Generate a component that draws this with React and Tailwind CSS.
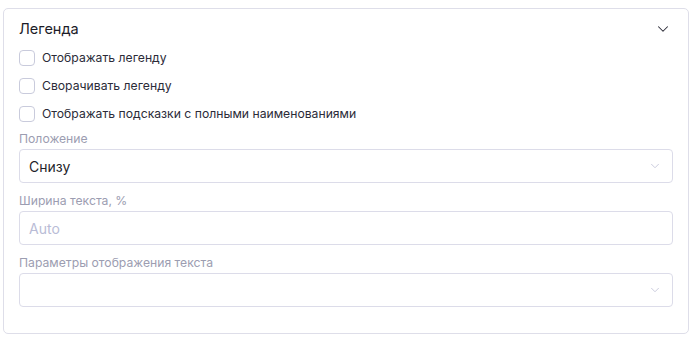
import { ChevronDown } from "lucide-react";

function Check({ label }) {
  return (
    <label className="flex h-[28px] items-center gap-[7px]">
      <span className="h-4 w-4 rounded-[4px] border border-[#c9cbdc] bg-white" />
      <span className="text-[12.2px] text-[#2b2b38]">{label}</span>
    </label>
  );
}

function Field({ label, children }) {
  return (
    <div className="flex flex-col">
      <div className="h-[21px] pt-[2px] text-[12.2px] text-[#9c9db1]">{label}</div>
      {children}
    </div>
  );
}

function Select({ value }) {
  return (
    <div className="flex h-[34px] items-center justify-between rounded-[4px] border border-[#dcdce9] bg-white pl-[9px] pr-[10px]">
      <span className="text-[14px] text-[#1f1f2b]">{value}</span>
      <ChevronDown className="h-[14px] w-[14px] text-[#c3c5d8]" strokeWidth={1.5} />
    </div>
  );
}

export default function App() {
  return (
    <div className="h-[337px] w-[695px] bg-white pl-[3px] pr-[6px] pt-[8px] font-['Inter',sans-serif]">
      <div className="h-[326px] rounded-[5px] border border-[#dedee9] pl-[15px] pr-[15px]">
        <div className="flex h-[35px] items-center justify-between pt-[5px]">
          <span className="text-[14.5px] text-[#1c1c28]">Легенда</span>
          <ChevronDown className="mr-[1px] h-[18px] w-[18px] text-[#2a2a36]" strokeWidth={1.4} />
        </div>
        <div className="flex flex-col">
          <Check label="Отображать легенду" />
          <Check label="Сворачивать легенду" />
          <Check label="Отображать подсказки с полными наименованиями" />
        </div>
        <div className="flex flex-col gap-[7px]">
          <Field label="Положение">
            <Select value="Снизу" />
          </Field>
          <Field label="Ширина текста, %">
            <div className="flex h-[34px] items-center rounded-[4px] border border-[#dcdce9] bg-white pl-[9px]">
              <span className="text-[14px] text-[#b9bcd6]">Auto</span>
            </div>
          </Field>
          <Field label="Параметры отображения текста">
            <Select value="" />
          </Field>
        </div>
      </div>
    </div>
  );
}
